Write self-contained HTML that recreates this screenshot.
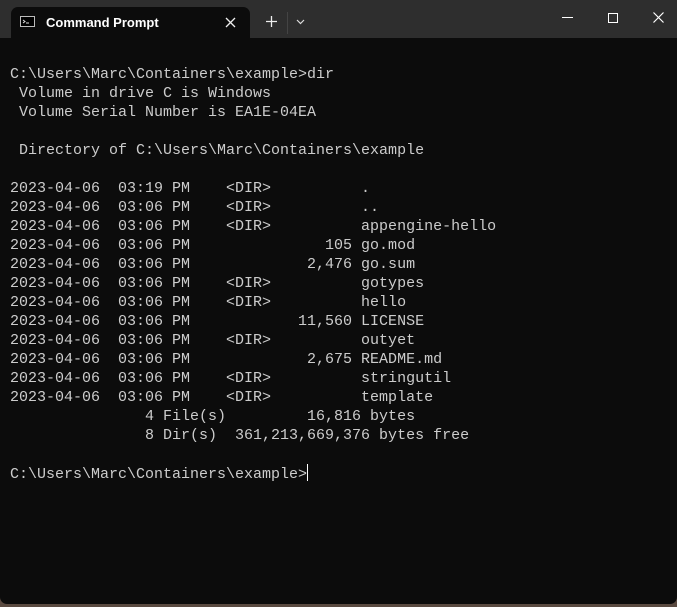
<!DOCTYPE html>
<html><head><style>
html,body{margin:0;padding:0;width:677px;height:607px;overflow:hidden;background:#5a4a40;}
.win{position:absolute;left:0;top:0;width:677px;height:604px;background:#0c0c0c;border-radius:0 0 7px 7px;overflow:hidden;}
.tb{position:absolute;left:0;top:0;width:677px;height:38px;background:#2e2e2e;}
.tab{position:absolute;left:11px;top:7px;width:239px;height:31px;background:#0c0c0c;border-radius:7px 7px 0 0;}
.tab .t{position:absolute;left:35px;top:8px;font:bold 13px "Liberation Sans",sans-serif;color:#fff;}
pre{position:absolute;left:10px;top:65px;margin:0;font:15px/19px "Liberation Mono",monospace;color:#cccccc;}
.cur{display:inline-block;width:1px;height:17px;background:#fff;vertical-align:-3px;}
</style></head><body>
<div class="win">
<div class="tb">
<div class="tab">
<svg style="position:absolute;left:9px;top:9px" width="16" height="12"><rect x="0.5" y="0.5" width="14" height="10" fill="#000" stroke="#bbb"/><path d="M3 4 L5 5.5 L3 7 M6 7 H9" stroke="#ddd" fill="none"/></svg>
<div class="t">Command Prompt</div>
<svg style="position:absolute;left:214px;top:10px" width="11" height="11"><path d="M1 1L10 10M10 1L1 10" stroke="#eee" stroke-width="1.3"/></svg>
</div>
<svg style="position:absolute;left:266px;top:16px" width="11" height="11"><path d="M5.5 0V11M0 5.5H11" stroke="#eee" stroke-width="1.3"/></svg>
<div style="position:absolute;left:287px;top:12px;width:1px;height:22px;background:#444"></div>
<svg style="position:absolute;left:296px;top:19px" width="9" height="6"><path d="M1 1L4.5 4.5L8 1" stroke="#ddd" fill="none" stroke-width="1.2"/></svg>
<div style="position:absolute;left:562px;top:17px;width:11px;height:1px;background:#fff"></div>
<div style="position:absolute;left:608px;top:13px;width:8px;height:8px;border:1px solid #fff"></div>
<svg style="position:absolute;left:653px;top:12px" width="11" height="11"><path d="M0.5 0.5L10.5 10.5M10.5 0.5L0.5 10.5" stroke="#fff" stroke-width="1.2"/></svg>
</div>
<pre>C:\Users\Marc\Containers\example>dir
 Volume in drive C is Windows
 Volume Serial Number is EA1E-04EA

 Directory of C:\Users\Marc\Containers\example

2023-04-06  03:19 PM    &lt;DIR&gt;          .
2023-04-06  03:06 PM    &lt;DIR&gt;          ..
2023-04-06  03:06 PM    &lt;DIR&gt;          appengine-hello
2023-04-06  03:06 PM               105 go.mod
2023-04-06  03:06 PM             2,476 go.sum
2023-04-06  03:06 PM    &lt;DIR&gt;          gotypes
2023-04-06  03:06 PM    &lt;DIR&gt;          hello
2023-04-06  03:06 PM            11,560 LICENSE
2023-04-06  03:06 PM    &lt;DIR&gt;          outyet
2023-04-06  03:06 PM             2,675 README.md
2023-04-06  03:06 PM    &lt;DIR&gt;          stringutil
2023-04-06  03:06 PM    &lt;DIR&gt;          template
               4 File(s)         16,816 bytes
               8 Dir(s)  361,213,669,376 bytes free

C:\Users\Marc\Containers\example><span class="cur"></span></pre>
</div>
</body></html>
